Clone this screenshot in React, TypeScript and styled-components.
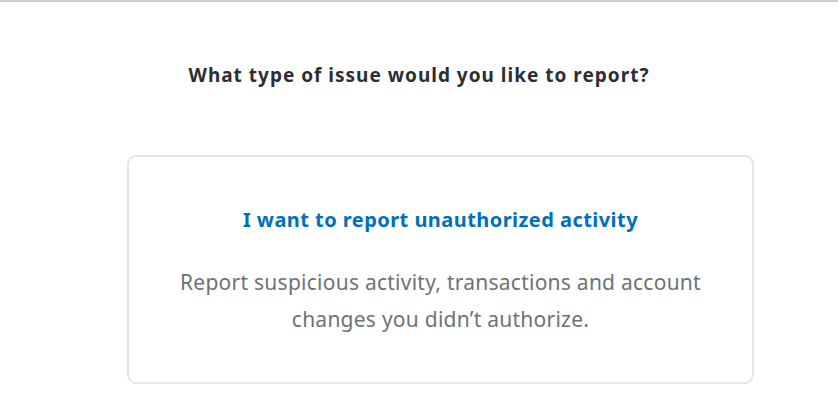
import styled, { createGlobalStyle } from "styled-components";

const GlobalStyle = createGlobalStyle`
  html, body {
    margin: 0;
    padding: 0;
    background: #ffffff;
  }

  body {
    font-family: "Noto Sans", "Open Sans", sans-serif;
  }
`

const Page = styled.main`
  min-height: 419px;
  border-top: 2px solid #cbd0d5;
  box-sizing: border-box;
  display: flex;
  flex-direction: column;
`

const Question = styled.h2`
  margin: 59px 0 0;
  text-align: center;
  color: #2c2e2f;
  font-size: 19px;
  font-weight: 700;
  letter-spacing: 1px;
  line-height: 28px;
`

const Options = styled.div`
  margin-top: 66px;
  padding-left: 127px;
  display: flex;
  flex-direction: column;
`

const OptionCard = styled.button`
  width: 627px;
  height: 229px;
  box-sizing: border-box;
  border: 2px solid #e3e6e9;
  border-radius: 9px;
  background: #ffffff;
  font-family: inherit;
  display: flex;
  flex-direction: column;
  align-items: center;
  padding: 47px 50px 0;
  cursor: pointer;
`

const OptionTitle = styled.span`
  color: #0070ba;
  font-size: 20px;
  font-weight: 700;
  letter-spacing: 0.45px;
  line-height: 32px;
`

const OptionText = styled.span`
  margin-top: 28px;
  color: #6c7378;
  font-size: 21px;
  letter-spacing: 0.25px;
  line-height: 37px;
  text-align: center;
  max-width: 540px;
`

const App = () => {

  return (
    <>
      <GlobalStyle />
      <Page>
        <Question>
          What type of issue would you like to report?
        </Question>
        <Options>
          <OptionCard type="button">
            <OptionTitle>
              I want to report unauthorized activity
            </OptionTitle>
            <OptionText>
              Report suspicious activity, transactions and account changes you didn’t authorize.
            </OptionText>
          </OptionCard>
        </Options>
      </Page>
    </>
  )
};

export default App;
